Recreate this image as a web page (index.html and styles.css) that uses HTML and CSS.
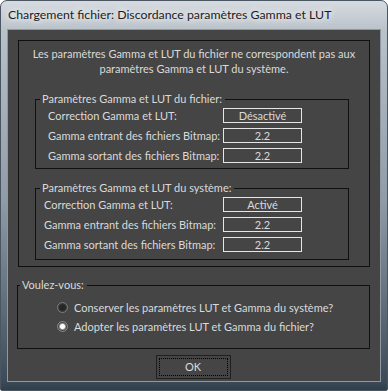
FILE: index.html
```html
<!DOCTYPE html>
<html lang="fr">
<head>
    <meta charset="UTF-8">
    <title>Chargement fichier</title>
    <link rel="stylesheet" href="styles.css">
</head>
<body>
    <div class="window">
        <div class="titlebar">Chargement fichier: Discordance paramètres Gamma et LUT</div>

        <div class="client">
            <div class="panel">
                <p class="message">Les paramètres Gamma et LUT du fichier ne correspondent pas aux<br>paramètres Gamma et LUT du système.</p>

                <fieldset class="group group-file">
                    <legend>Paramètres Gamma et LUT du fichier:</legend>
                    <div class="row"><span>Correction Gamma et LUT:</span><span class="value">Désactivé</span></div>
                    <div class="row"><span>Gamma entrant des fichiers Bitmap:</span><span class="value">2.2</span></div>
                    <div class="row"><span>Gamma sortant des fichiers Bitmap:</span><span class="value">2.2</span></div>
                </fieldset>

                <fieldset class="group group-system">
                    <legend>Paramètres Gamma et LUT du système:</legend>
                    <div class="row"><span>Correction Gamma et LUT:</span><span class="value">Activé</span></div>
                    <div class="row"><span>Gamma entrant des fichiers Bitmap:</span><span class="value">2.2</span></div>
                    <div class="row"><span>Gamma sortant des fichiers Bitmap:</span><span class="value">2.2</span></div>
                </fieldset>
            </div>

            <fieldset class="choice">
                <legend>Voulez-vous:</legend>
                <div class="option"><span class="radio"></span>Conserver les paramètres LUT et Gamma du système?</div>
                <div class="option"><span class="radio checked"></span>Adopter les paramètres LUT et Gamma du fichier?</div>
            </fieldset>

            <div class="actions">
                <button class="ok"><span>OK</span></button>
            </div>
        </div>
    </div>
</body>
</html>
```

FILE: styles.css
```css
html, body {
    margin: 0;
    padding: 0;
    background: #ffffff;
}
.window {
    width: 388px;
    height: 391px;
    box-sizing: border-box;
    border: 1px solid #4a5662;
    border-radius: 7px 7px 2px 2px;
    background: linear-gradient(#d6dbe0 0px, #b9c1c9 30px, #8f9ba7 200px, #3d4b59 380px, #2e3b48 391px);
    font-family: Lato, "Liberation Sans", sans-serif;
    font-size: 11px;
    color: #dadada;
    white-space: nowrap;
    overflow: hidden;
}
.titlebar {
    height: 28px;
    padding-left: 7px;
    line-height: 28px;
    font-size: 12.3px;
    color: #1c1c1c;
    text-shadow: 0 0 6px #ffffff, 0 0 10px #ffffff;
}
.client {
    margin: 0 6px;
    height: 353px;
    box-sizing: border-box;
    border: 1px solid #8d98a3;
    background-color: #454545;
    padding: 10px 10px 0 10px;
}
.panel {
    border: 1px solid #101010;
    padding: 5px 0 6px 0;
}
.message {
    margin: 0 0 17px 0;
    text-align: center;
    line-height: 15px;
}
.group {
    margin: 0 20px 0 16px;
    padding: 0 46px 3px 12px;
    border: 1px solid #101010;
    min-width: 0;
}
.group-system {
    margin-top: 13px;
    padding-left: 8px;
    padding-bottom: 5px;
}
.group legend,
.choice legend {
    padding: 0 3px 0 2px;
    line-height: 12px;
}
.group-file legend {
    margin-left: -8px;
}
.group-system legend {
    margin-left: -4px;
}
.row {
    display: flex;
    align-items: center;
    justify-content: space-between;
    height: 20px;
}
.value {
    width: 77px;
    height: 13px;
    border: 1px solid #e6e6e6;
    text-align: center;
    line-height: 13px;
}
.choice {
    margin: 12px 0 0 -1px;
    padding: 7px 0 12px 39px;
    border: 1px solid #101010;
    min-width: 0;
}
.choice legend {
    margin-left: -37px;
}
.option {
    display: flex;
    align-items: center;
    height: 19px;
}
.radio {
    width: 11px;
    height: 11px;
    box-sizing: border-box;
    border-radius: 50%;
    margin-right: 6px;
    border: 1px solid #7c7c7c;
    background: radial-gradient(circle at 50% 50%, #262626 0 2.5px, #3a3a3a 4px);
}
.radio.checked {
    border-color: #8a8a8a;
    background: radial-gradient(circle at 50% 50%, #ffffff 0 2px, #9a9a9a 3px, #4a4a4a 4px);
}
.actions {
    display: flex;
    justify-content: center;
    padding-top: 6px;
    padding-right: 2px;
}
.ok {
    width: 75px;
    height: 24px;
    padding: 2px;
    border: 1px solid #202020;
    background-color: #454545;
    font-family: inherit;
    font-size: 11px;
    color: #dadada;
}
.ok span {
    display: block;
    height: 100%;
    box-sizing: border-box;
    border: 1px dotted #000000;
    line-height: 16px;
}
```
